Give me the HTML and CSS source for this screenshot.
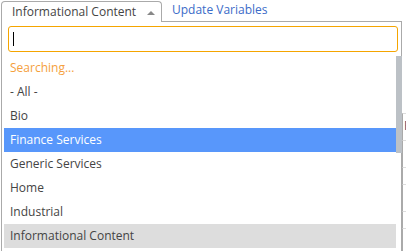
FILE: index.html
```html
<!doctype html>
<html>
  <head>
    <meta charset="UTF-8" />
    <link rel="stylesheet" href="styles.css">
  </head>
  <body>
    <div class="page">
      <div class="picker">
        <div class="head">
          <div class="tab">
            <span class="tab-label">Informational Content</span>
            <span class="arrow"></span>
          </div>
          <div class="rest">
            <a class="link">Update Variables</a>
          </div>
        </div>
        <div class="search">
          <div class="search-box"><span class="caret"></span></div>
        </div>
        <div class="results">
          <ul class="options">
            <li class="searching">Searching...</li>
            <li>- All -</li>
            <li>Bio</li>
            <li class="highlighted">Finance Services</li>
            <li>Generic Services</li>
            <li>Home</li>
            <li>Industrial</li>
            <li class="selected">Informational Content</li>
          </ul>
          <div class="scrollbar"><div class="thumb"></div></div>
        </div>
      </div>
      <div class="behind">
        <div class="behind-top"></div>
        <div class="behind-row">F</div>
        <div class="behind-row"></div>
        <div class="behind-row short"></div>
        <div class="behind-row"></div>
        <div class="behind-row short"></div>
        <div class="behind-row"></div>
      </div>
    </div>
  </body>
</html>
```

FILE: styles.css
```css
html,
body {
  margin: 0;
  height: 251px;
  overflow: hidden;
  background: #fff;
  font-family: "Open Sans", sans-serif;
  font-size: 12px;
  color: #444;
}
.page {
  display: flex;
  height: 251px;
}
.picker {
  width: 401px;
  margin-left: 1px;
  display: flex;
  flex-direction: column;
}
.head {
  display: flex;
  height: 21px;
  margin-top: 1px;
}
.tab {
  width: 161px;
  box-sizing: border-box;
  height: 21px;
  border: 1px solid #aaa;
  border-bottom: none;
  border-radius: 4px 4px 0 0;
  padding-left: 10px;
  display: flex;
  align-items: center;
  line-height: 20px;
  color: #444;
}
.arrow {
  margin-left: auto;
  margin-right: 6px;
  margin-top: 1px;
  width: 0;
  height: 0;
  border-left: 4px solid transparent;
  border-right: 4px solid transparent;
  border-bottom: 4px solid #888;
}
.rest {
  flex: 1;
  border-bottom: 1px solid #aaa;
  padding-left: 10px;
  line-height: 18px;
}
.link {
  color: #3b6bc8;
  cursor: pointer;
}
.search {
  border-left: 1px solid #aaa;
  border-right: 1px solid #aaa;
  padding: 4px 3px 4px 6px;
}
.search-box {
  height: 26px;
  box-sizing: border-box;
  border: 1px solid #f5a500;
  border-radius: 3px;
  display: flex;
  align-items: center;
  padding-left: 4px;
}
.caret {
  width: 1px;
  height: 14px;
  background: #000;
}
.results {
  flex: 1;
  display: flex;
  border-left: 1px solid #aaa;
  overflow: hidden;
}
.options {
  flex: 1;
  list-style: none;
  margin: 0 0 0 2px;
  padding: 0;
}
.options li {
  height: 24px;
  line-height: 24px;
  padding-left: 6px;
  white-space: nowrap;
}
.options .searching {
  color: #f5a03c;
}
.options .highlighted {
  background: #5897fb;
  color: #fff;
}
.options .selected {
  background: #ddd;
}
.scrollbar {
  width: 6px;
  box-shadow: inset -1px 0 #aaa;
}
.thumb {
  height: 97px;
  background: #bcc1c6;
}
.behind {
  flex: 1;
  overflow: hidden;
}
.behind-top {
  height: 113px;
}
.behind-row {
  height: 26px;
  border-top: 1px solid #ddd;
  border-left: 1px solid #aaa;
  font-size: 13px;
  line-height: 22px;
  color: #1b3f6b;
  padding-left: 1px;
}
.behind-row.short {
  height: 16px;
}
```
